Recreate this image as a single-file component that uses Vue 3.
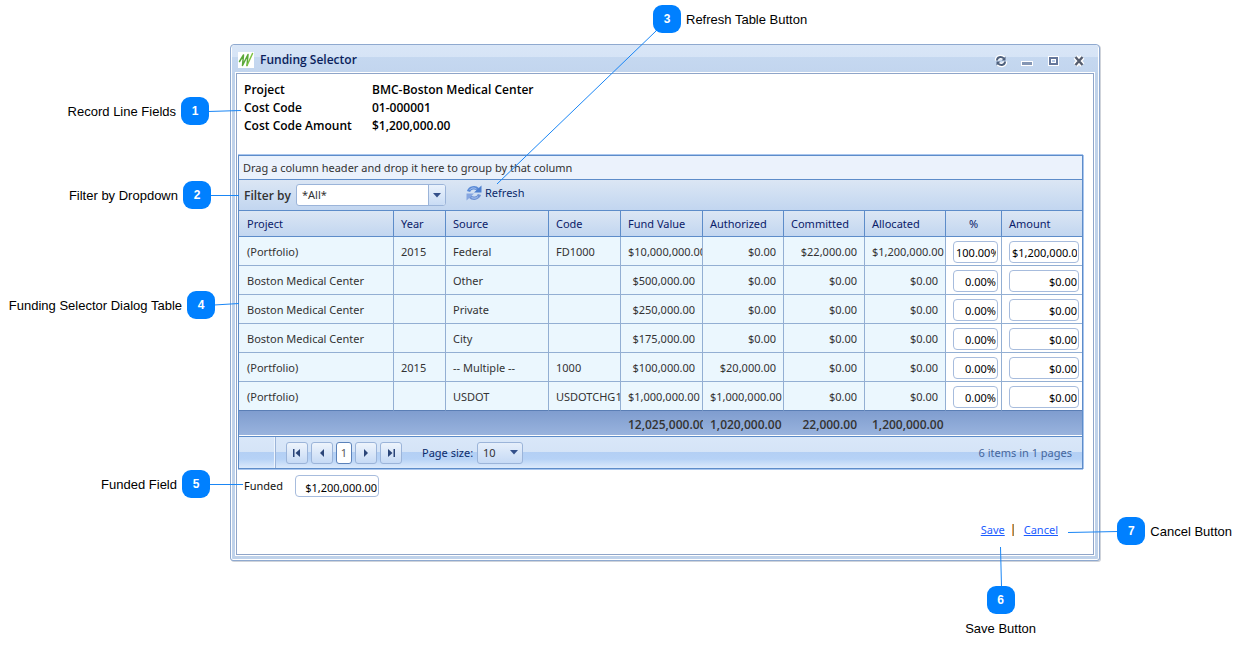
<script setup>
import { ref } from 'vue'

const record = [
  { label: 'Project', value: 'BMC-Boston Medical Center' },
  { label: 'Cost Code', value: '01-000001' },
  { label: 'Cost Code Amount', value: '$1,200,000.00' },
]

const columns = [
  { key: 'project', title: 'Project' },
  { key: 'year', title: 'Year' },
  { key: 'source', title: 'Source' },
  { key: 'code', title: 'Code' },
  { key: 'fund', title: 'Fund Value', num: true, total: '12,025,000.00' },
  { key: 'authorized', title: 'Authorized', num: true, total: '1,020,000.00' },
  { key: 'committed', title: 'Committed', num: true, total: '22,000.00' },
  { key: 'allocated', title: 'Allocated', num: true, total: '1,200,000.00' },
  { key: 'percent', title: '%', edit: true },
  { key: 'amount', title: 'Amount', edit: true },
]

const row = (project, year, source, code, fund, authorized, committed, allocated, percent, amount) =>
  ({ project, year, source, code, fund, authorized, committed, allocated, percent, amount })

const rows = ref([
  row('(Portfolio)', '2015', 'Federal', 'FD1000', '$10,000,000.00', '$0.00', '$22,000.00', '$1,200,000.00', '100.00%', '$1,200,000.00'),
  row('Boston Medical Center', '', 'Other', '', '$500,000.00', '$0.00', '$0.00', '$0.00', '0.00%', '$0.00'),
  row('Boston Medical Center', '', 'Private', '', '$250,000.00', '$0.00', '$0.00', '$0.00', '0.00%', '$0.00'),
  row('Boston Medical Center', '', 'City', '', '$175,000.00', '$0.00', '$0.00', '$0.00', '0.00%', '$0.00'),
  row('(Portfolio)', '2015', '-- Multiple --', '1000', '$100,000.00', '$20,000.00', '$0.00', '$0.00', '0.00%', '$0.00'),
  row('(Portfolio)', '', 'USDOT', 'USDOTCHG1', '$1,000,000.00', '$1,000,000.00', '$0.00', '$0.00', '0.00%', '$0.00'),
])

const funded = ref('$1,200,000.00')

const callouts = [
  { n: 1, text: 'Record Line Fields', cls: 'c1' },
  { n: 2, text: 'Filter by Dropdown', cls: 'c2' },
  { n: 3, text: 'Refresh Table Button', cls: 'c3' },
  { n: 4, text: 'Funding Selector Dialog Table', cls: 'c4' },
  { n: 5, text: 'Funded Field', cls: 'c5' },
  { n: 6, text: 'Save Button', cls: 'c6' },
  { n: 7, text: 'Cancel Button', cls: 'c7' },
]
</script>

<template>
  <main class="stage">
    <section class="window" aria-label="Funding Selector">
      <header class="titlebar">
        <svg class="logo" viewBox="0 0 16 16" aria-hidden="true">
          <rect width="16" height="16" fill="#fff" />
          <g fill="none" stroke-linecap="round" stroke-linejoin="round">
            <path d="M1.500 9.500 5.500 3 4.500 13.500 10 2.500 9 13.500" stroke="#5aa83a" stroke-width="1.500" />
            <path d="M9 13.500 14.500 1.500" stroke="#7cc142" stroke-width="1.500" />
          </g>
        </svg>
        <h1>Funding Selector</h1>
        <div class="commands">
          <button type="button" aria-label="Reload">
            <svg viewBox="0 0 14 14">
              <g fill="none" stroke="#fff" stroke-width="4.500">
                <path d="M3 6.500C3 3 7 2 10 4.500M11 7.500C11 11 7 12 4 9.500" />
              </g>
              <g fill="none" stroke="#4d5f7c" stroke-width="2">
                <path d="M3 6.500C3 3 7 2 10 4.500M11 7.500C11 11 7 12 4 9.500" />
              </g>
              <path d="M11.500 2.500v4H7.500zM2.500 11.500V7.500H6.500z" fill="#4d5f7c" />
            </svg>
          </button>
          <button type="button" aria-label="Minimize">
            <svg viewBox="0 0 14 14">
              <rect x="1" y="7" width="12" height="5" fill="#fff" />
              <rect x="2" y="8" width="10" height="3" fill="#8496b4" />
            </svg>
          </button>
          <button type="button" aria-label="Maximize">
            <svg viewBox="0 0 14 14">
              <rect x="2" y="2" width="11" height="10" fill="#fff" />
              <rect x="3" y="3" width="9" height="8" fill="#64769a" />
              <rect x="5" y="5" width="5" height="4" fill="#fff" />
              <rect x="6" y="6" width="3" height="2" fill="#b9cce9" />
            </svg>
          </button>
          <button type="button" aria-label="Close">
            <svg viewBox="0 0 14 14">
              <path d="M3.500 3 10.500 11M10.500 3 3.500 11" stroke="#fff" stroke-width="5" />
              <path d="M3.500 3 10.500 11M10.500 3 3.500 11" stroke="#555d6e" stroke-width="2.400" />
            </svg>
          </button>
        </div>
      </header>

      <div class="body">
        <dl class="record">
          <template v-for="r in record" :key="r.label">
            <dt>{{ r.label }}</dt>
            <dd>{{ r.value }}</dd>
          </template>
        </dl>

        <div class="grid">
          <p class="group">Drag a column header and drop it here to group by that column</p>
          <div class="toolbar">
            <label for="filter">Filter by</label>
            <span class="select filter">
              <select id="filter"><option>*All*</option></select>
              <i><svg viewBox="0 0 8 5"><path d="M0 0h8L4 4.500z" fill="#33508a" /></svg></i>
            </span>
            <button type="button" class="refresh">
              <svg viewBox="0 0 16 16" aria-hidden="true">
                <g fill="none" stroke-width="3.400">
                  <path d="M2.500 6.500C4 2.500 9 1.500 12 4.500" stroke="#5a8ad6" />
                  <path d="M13.500 9.500C12 13.500 7 14.500 4 11.500" stroke="#6f93d4" />
                </g>
                <path d="M15.500 .500v7H8z" fill="#4c7fd0" />
                <path d="M.500 15.500V8.500h7.500z" fill="#86a6e0" />
                <path d="M3.500 5C5.500 2.500 8.500 2.500 10.500 4M5.500 12.500C7.500 13.500 10.500 13.500 12 11.500" fill="none" stroke="#a9c5f2" />
              </svg>
              <span>Refresh</span>
            </button>
          </div>

          <table>
            <colgroup><col v-for="c in columns" :key="c.key" :class="'col-' + c.key" /></colgroup>
            <thead>
              <tr><th v-for="c in columns" :key="c.key" scope="col" :class="{ mid: c.key === 'percent' }">{{ c.title }}</th></tr>
            </thead>
            <tbody>
              <tr v-for="(r, i) in rows" :key="i">
                <td v-for="c in columns" :key="c.key" :class="{ num: c.num, edit: c.edit }">
                  <input v-if="c.edit" v-model="r[c.key]" type="text" :aria-label="c.title + ', row ' + (i + 1)" />
                  <template v-else>{{ r[c.key] }}</template>
                </td>
              </tr>
            </tbody>
            <tfoot>
              <tr><td v-for="c in columns" :key="c.key" :class="{ num: c.num }">{{ c.total }}</td></tr>
            </tfoot>
          </table>

          <nav class="pager" aria-label="Pages">
            <span class="stub"></span>
            <button type="button" aria-label="First page"><svg viewBox="0 0 8 8"><path d="M0 0h1.500v8H0zM7 0v8L2.500 4z" /></svg></button>
            <button type="button" aria-label="Previous page"><svg viewBox="0 0 8 8"><path d="M6 0v8L2 4z" /></svg></button>
            <button type="button" class="current">1</button>
            <button type="button" aria-label="Next page"><svg viewBox="0 0 8 8"><path d="M2 0v8l4-4z" /></svg></button>
            <button type="button" aria-label="Last page"><svg viewBox="0 0 8 8"><path d="M6.500 0H8v8H6.500zM1 0v8l4.500-4z" /></svg></button>
            <label for="size">Page size:</label>
            <span class="select size">
              <select id="size"><option>10</option></select>
              <i><svg viewBox="0 0 8 5"><path d="M0 0h8L4 4.500z" fill="#33508a" /></svg></i>
            </span>
            <span class="info">6 items in 1 pages</span>
          </nav>
        </div>

        <div class="funded">
          <label for="funded">Funded</label>
          <input id="funded" v-model="funded" type="text" />
        </div>

        <div class="actions">
          <a href="#save">Save</a>
          <span class="bar"></span>
          <a href="#cancel">Cancel</a>
        </div>
      </div>
    </section>

    <svg class="lines left" width="660" height="645" aria-hidden="true">
      <path d="M208 111.500 241 110.500M210 195.500H239M656 31 497 184M214 305 239 303.500M209 484.500H243" />
    </svg>
    <svg class="lines right" width="242" height="645" aria-hidden="true">
      <path d="M68 532.500 118 531.500M.500 547 1.500 587" />
    </svg>
    <div v-for="c in callouts" :key="c.n" class="callout" :class="c.cls">
      <b>{{ c.n }}</b><span>{{ c.text }}</span>
    </div>
  </main>
</template>

<style>
body {
  background: #fff;
}
</style>

<style scoped>
.stage {
  position: relative;
  box-sizing: border-box;
  min-height: 645px;
  padding: 44px 142px 84px 230px;
  font: 11px/18px "Noto Sans", "Open Sans", sans-serif;
  color: #333;
}
.stage * {
  box-sizing: border-box;
}
button, input, select {
  font: inherit;
  color: inherit;
  margin: 0;
}
button {
  padding: 0;
  border: 0;
  background: none;
}
.window {
  border: 1px solid #8fa9cf;
  border-radius: 4px 4px 3px 3px;
  padding: 0 5px 5px;
  background: #bfd2ea;
  box-shadow: inset 0 0 0 1px #fff, 1px 1px 0 #cfd3da;
}
.titlebar {
  display: flex;
  align-items: center;
  height: 28px;
  margin: 0 -4px;
  padding: 2px 12px 0 6px;
  border-radius: 3px 3px 0 0;
  background: linear-gradient(#d9e6f7 0, #d6e4f6 12px, #c5d8f0 12px, #c2d5ee 100%);
}
.logo {
  width: 16px;
  height: 16px;
}
h1 {
  flex: 1;
  margin: 0 0 0 6px;
  font: 600 12px/18px "Open Sans", sans-serif;
  color: #0b1f5c;
}
.commands {
  display: flex;
  gap: 12px;
  padding-top: 2px;
}
.commands button, .commands svg {
  display: block;
  width: 14px;
  height: 14px;
}
.body {
  min-height: 482px;
  padding: 7px 10px 12px 1px;
  border: 1px solid #8fa5c9;
  outline: 1px solid #fff;
  background: #fff;
}
.record {
  display: grid;
  grid-template-columns: 128px 1fr;
  margin: 0 0 20px 6px;
  font: 600 12px/18px "Open Sans", sans-serif;
  color: #000;
}
.record dd {
  margin: 0;
}
.grid {
  border: 1px solid #5d8cc9;
  box-shadow: 0 -1px #a9c6ee, 1px 0 #a9c6ee, 0 1px #a9c6ee;
}
.group {
  height: 24px;
  margin: 0;
  padding: 3px 4px;
  border-bottom: 1px solid #5d8cc9;
  background: #ebf2fc;
}
.toolbar {
  display: flex;
  align-items: center;
  height: 31px;
  padding-left: 5px;
  border-bottom: 1px solid #5d8cc9;
  background: linear-gradient(#dbe6f4, #c2d6f0);
}
.toolbar label {
  width: 52px;
  padding-top: 2px;
  font: 600 12px/18px "Open Sans", sans-serif;
}
.select {
  position: relative;
  display: flex;
  height: 22px;
  border: 1px solid #9bb4d9;
  border-radius: 3px;
  overflow: hidden;
}
.select select {
  appearance: none;
  width: 100%;
  padding: 0 5px;
  border: 0;
  background: none;
}
.select i {
  position: absolute;
  top: 0;
  right: 0;
  bottom: 0;
  display: flex;
  align-items: center;
  justify-content: center;
  width: 17px;
  pointer-events: none;
}
.select svg {
  width: 8px;
  height: 5px;
}
.filter {
  width: 150px;
  background: #fff;
}
.filter i {
  border-left: 1px solid #9bb4d9;
  background: linear-gradient(#eaf2fc, #c9dcf5);
}
.refresh {
  display: flex;
  align-items: center;
  gap: 3px;
  margin: 0 0 4px 20px;
  color: #0b2a6b;
}
.refresh svg {
  width: 16px;
  height: 16px;
}
table {
  width: 100%;
  table-layout: fixed;
  border-collapse: separate;
  border-spacing: 0;
}
.col-year { width: 52px; }
.col-source { width: 103px; }
.col-code { width: 72px; }
.col-fund { width: 82px; }
.col-authorized, .col-committed, .col-allocated { width: 81px; }
.col-percent { width: 56px; }
.col-amount { width: 80px; }
th, td {
  overflow: hidden;
  padding: 0 7px 0 8px;
  white-space: nowrap;
  text-align: left;
  font-weight: 400;
  border-right: 1px solid #93afd3;
  border-bottom: 1px solid #93afd3;
}
th:not(:first-child), td:not(:first-child) {
  padding-left: 7px;
}
th:last-child, td:last-child {
  border-right: 0;
}
th {
  height: 26px;
  border-color: #5d8cc9;
  background: linear-gradient(#dbe6f4, #c2d6f0);
  color: #0b2069;
}
th.mid {
  text-align: center;
}
td {
  height: 29px;
  padding-top: 2px;
  background: #ebf7fe;
}
.num {
  text-align: right;
}
td.edit {
  padding: 1px 3px 0 7px;
  background: #fff;
}
tbody tr:last-child td {
  border-bottom-color: #5a7eb5;
}
input {
  display: block;
  width: 100%;
  height: 22px;
  padding: 2px 1px 0 2px;
  border: 1px solid #a7bcdd;
  border-radius: 4px;
  background: #fff;
  color: #000;
  text-align: right;
}
tfoot td {
  height: 25px;
  padding: 4px 8px 0 7px;
  border-right: 0;
  border-bottom-color: #fff;
  background: none;
  font: 600 12px/18px "Open Sans", sans-serif;
}
tfoot tr {
  background: linear-gradient(#7f9dcf, #9ab4de);
}
.pager {
  display: flex;
  align-items: center;
  gap: 3px;
  height: 32px;
  padding-right: 10px;
  border-top: 1px solid #5d8cc9;
  background: linear-gradient(#d9e7f9 0, #d5e4f7 15px, #b3cff4 15px, #b6d2f6 22px, #dceafb 100%);
  color: #0b2a6b;
}
.stub {
  align-self: stretch;
  width: 37px;
  margin-right: 7px;
  border-right: 1px solid #9bb4d9;
  box-shadow: inset -1px 0 #eef5fd;
}
.pager button {
  display: flex;
  align-items: center;
  justify-content: center;
  width: 22px;
  height: 22px;
  border: 1px solid #9bb4d9;
  border-radius: 3px;
  background: linear-gradient(#eef4fc, #c6daf5);
}
.pager button svg {
  width: 8px;
  height: 8px;
  fill: #2b4578;
}
.pager .current {
  width: 16px;
  border-color: #5b82ba;
  background: #fff;
  color: #5a5a5a;
}
.pager label {
  width: 52px;
  margin-left: 17px;
  padding-top: 1px;
  white-space: nowrap;
}
.size {
  width: 46px;
  background: linear-gradient(#e6effb, #c6daf5);
  color: #333;
}
.info {
  margin-left: auto;
  padding-top: 1px;
  color: #45669c;
}
.funded {
  display: flex;
  align-items: center;
  margin: 6px 0 0 6px;
  color: #111;
}
.funded label {
  width: 51px;
}
.funded input {
  width: 84px;
}
.actions {
  display: flex;
  align-items: center;
  justify-content: flex-end;
  margin: 24px 25px 0 0;
}
.actions a {
  color: #1a5cff;
}
.bar {
  width: 2px;
  height: 12px;
  margin: 0 10px 0 7px;
  border-left: 1px solid #f5a04a;
  background: #8a8a72;
}
.lines {
  position: absolute;
  top: 0;
  pointer-events: none;
  fill: none;
  stroke: #1a86f5;
  stroke-width: 1;
}
.left { left: 0; }
.right { right: 0; }
.callout {
  position: absolute;
  display: flex;
  align-items: center;
  gap: 5px;
  font: 13px/16px "Liberation Sans", Arial, sans-serif;
  color: #000;
  white-space: nowrap;
}
.callout span {
  padding-top: 2px;
}
.callout b {
  width: 28px;
  height: 28px;
  border-radius: 9px;
  background: #0080ff;
  color: #fff;
  font-size: 12px;
  line-height: 28px;
  text-align: center;
}
.c1, .c2, .c4, .c5 {
  flex-direction: row-reverse;
  justify-content: flex-start;
  left: 0;
}
.c1 { top: 97px; width: 209px; }
.c2 { top: 181px; width: 211px; }
.c3 { top: 5px; left: 653px; }
.c4 { top: 291px; width: 215px; }
.c5 { top: 470px; width: 210px; }
.c6 { top: 586px; right: 206px; flex-direction: column; }
.c7 { top: 517px; right: 10px; }
</style>
